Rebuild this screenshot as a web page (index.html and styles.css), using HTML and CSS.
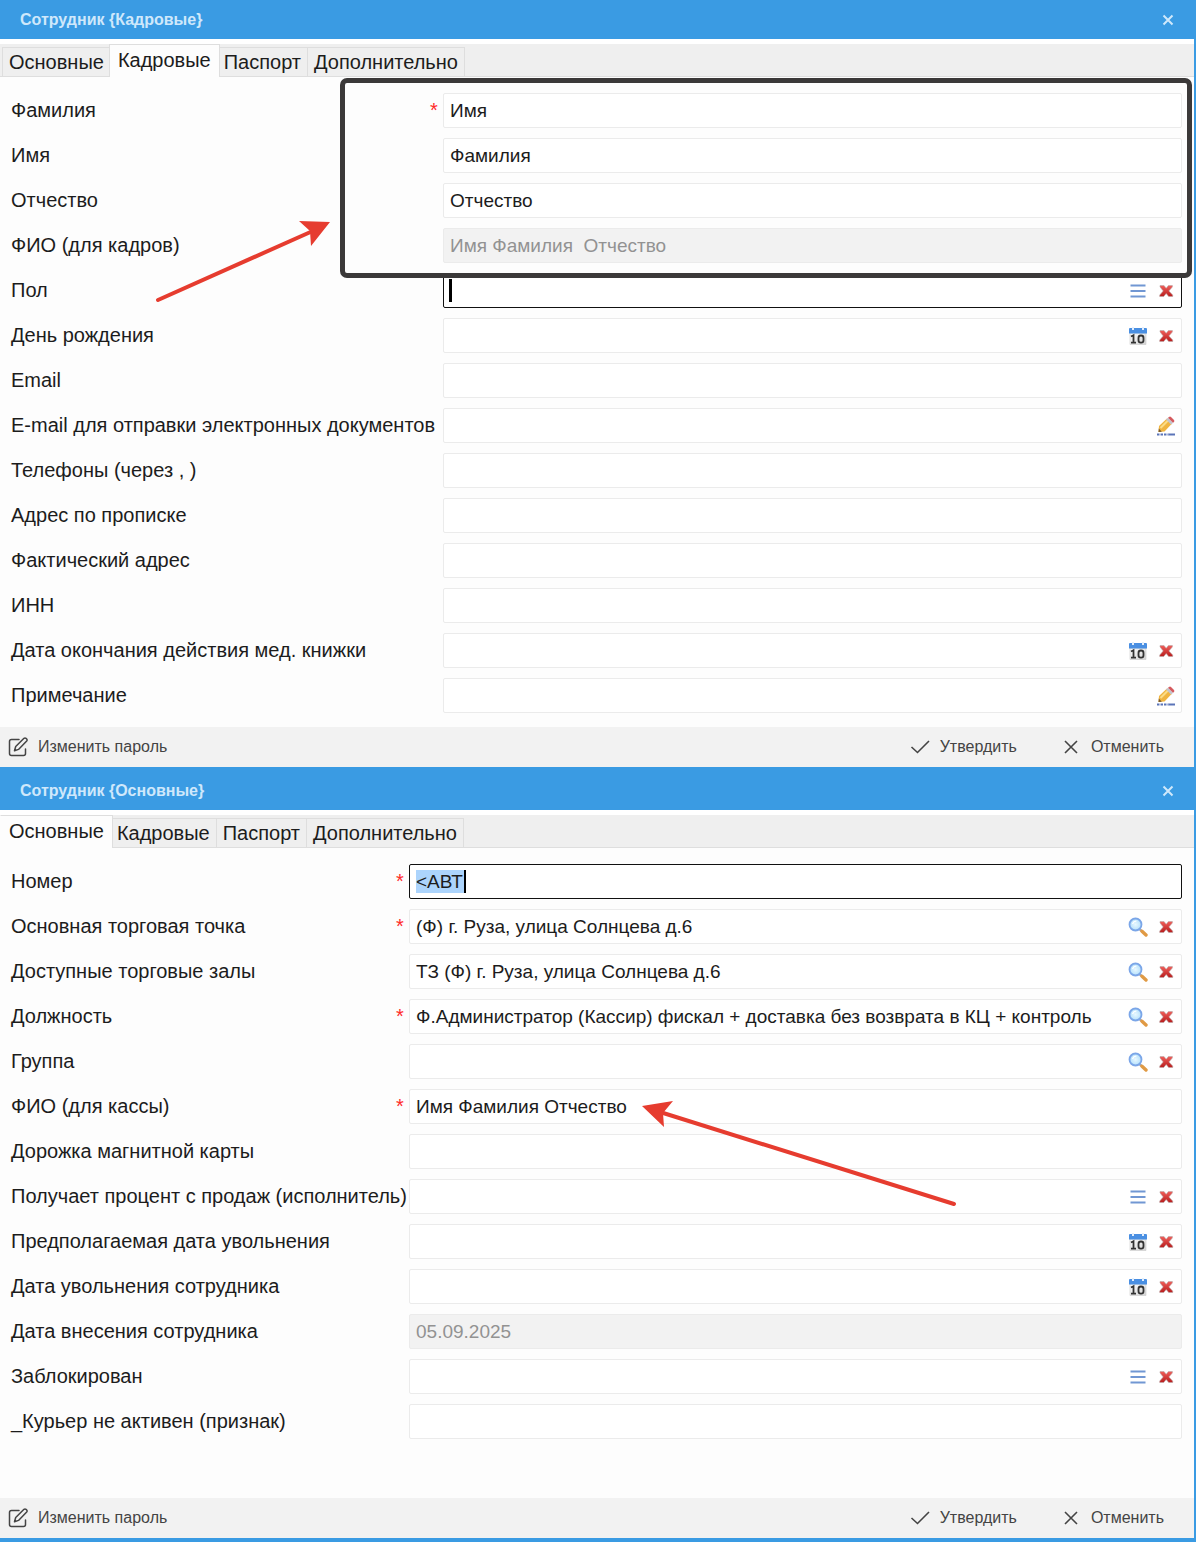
FILE: index.html
```html
<!DOCTYPE html>
<html lang="ru">
<head>
    <meta charset="UTF-8">
    <meta name="viewport" content="width=device-width, initial-scale=1.0">
    <title>Сотрудник</title>
    <link rel="stylesheet" href="styles.css">
</head>
<body>
    <svg class="sprite" aria-hidden="true">
        <defs>
            <linearGradient id="g-red" x1="0" y1="0" x2="0" y2="1">
                <stop offset="0" stop-color="#f0605c"/>
                <stop offset="1" stop-color="#b81c1c"/>
            </linearGradient>
            <linearGradient id="g-cal" x1="0" y1="0" x2="1" y2="1">
                <stop offset="0" stop-color="#ffffff"/>
                <stop offset="1" stop-color="#d2d2d2"/>
            </linearGradient>
            <radialGradient id="g-lens">
                <stop offset="0" stop-color="#e8f8ff"/>
                <stop offset="1" stop-color="#b4e0fc"/>
            </radialGradient>
        </defs>
        <symbol id="i-close" viewBox="0 0 12 12">
            <path d="M1.5 1.5l9 9M10.5 1.5l-9 9" fill="none" stroke="currentColor" stroke-width="2"/>
        </symbol>
        <symbol id="i-list" viewBox="0 0 20 20">
            <path d="M2.5 4.5h15M2.5 10h15M2.5 15.5h15" fill="none" stroke="#7197d3" stroke-width="2"/>
        </symbol>
        <symbol id="i-clear" viewBox="0 0 20 20">
            <path d="M4 4.5h4l2.2 2.7 2.2-2.7h4v1.4l-3.5 4 3.8 4.2v1.4h-4l-2.5-3-2.5 3h-4v-1.4l3.5-4.2L4 5.9z" fill="url(#g-red)" stroke="#b9a9a9" stroke-width="0.6"/>
        </symbol>
        <symbol id="i-date" viewBox="0 0 20 20">
            <path d="M2 7h16v11.5H2z" fill="url(#g-cal)" stroke="#c9c9c9" stroke-width="0.6"/>
            <path d="M1 3q0-1 1-1h16q1 0 1 1v4.500H1z" fill="#4a8fe2"/>
            <path d="M4 1h2v3H4zM14 1h2v3h-2z" fill="#e4eefb"/>
            <path d="M3 10.5l2.5-1.3v7.500M3 16.700h5" fill="none" stroke="#333" stroke-width="1.8"/>
            <rect x="10.5" y="9.5" width="5" height="7.2" rx="2.4" fill="none" stroke="#333" stroke-width="1.8"/>
        </symbol>
        <symbol id="i-search" viewBox="0 0 20 20">
            <path d="M11.5 12l2.5 2.3" stroke="#a8a8b0" stroke-width="2.4"/>
            <path d="M14 14.2l4 3.8" stroke="#e09a44" stroke-width="3.4" stroke-linecap="round"/>
            <circle cx="7.5" cy="7.5" r="6" fill="url(#g-lens)" stroke="#7ba6e8" stroke-width="1.8"/>
            <path d="M4.5 7q1-3 4-3" fill="none" stroke="#fff" stroke-width="1.2"/>
        </symbol>
        <symbol id="i-edit" viewBox="0 0 20 20">
            <path d="M2.5 16l.5-6 8-7.5 5 5-7.5 8z" fill="#f0b440"/>
            <path d="M4.5 12l8-8" stroke="#fbdc86" stroke-width="2"/>
            <path d="M2.5 16l.3-3.5 3 3.2z" fill="#7a5a2c"/>
            <path d="M10 3.5l2-1.7 5 5L15.2 8.8z" fill="#c4c4cc"/>
            <path d="M12 1.8l1-.9q1-.8 2 0l3 3q.8 1 0 2l-1 .9z" fill="#d55a5e"/>
            <path d="M1 18.5h11.5" stroke="#5b74b8" stroke-width="2" stroke-dasharray="2.5 1"/>
            <path d="M12.5 18.5H19" stroke="#5b74b8" stroke-width="2"/>
        </symbol>
        <symbol id="i-password" viewBox="0 0 20 20">
            <path d="M11 2.5H3.5q-2 0-2 2v12q0 2 2 2h12q2 0 2-2V12" fill="none" stroke="currentColor" stroke-width="1.5" stroke-linecap="round"/>
            <path d="M6.5 13.7l1.2-4.2 8.3-8.2q1-.8 2 0l.7.7q.8 1 0 2l-8.2 8.4z" fill="none" stroke="currentColor" stroke-width="1.5" stroke-linejoin="round"/>
        </symbol>
        <symbol id="i-ok" viewBox="0 0 20 20">
            <path d="M1.5 10l6 5.5L19 4" fill="none" stroke="currentColor" stroke-width="1.6"/>
        </symbol>
        <symbol id="i-cancel" viewBox="0 0 20 20">
            <path d="M4 4l12 12M16 4L4 16" fill="none" stroke="currentColor" stroke-width="1.6"/>
        </symbol>
    </svg>

    <section class="window">
        <header class="titlebar">
            <h2>Сотрудник {Кадровые}</h2>
            <button type="button" class="close" aria-label="Закрыть"><svg><use href="#i-close"/></svg></button>
        </header>
        <nav class="tabs">
            <button type="button" class="tab">Основные</button>
            <button type="button" class="tab active">Кадровые</button>
            <button type="button" class="tab">Паспорт</button>
            <button type="button" class="tab">Дополнительно</button>
        </nav>
        <form class="form form-personnel">
            <label for="surname">Фамилия</label>
            <span class="required">*</span>
            <div class="field"><input type="text" id="surname" value="Имя"></div>

            <label for="name">Имя</label>
            <div class="field"><input type="text" id="name" value="Фамилия"></div>

            <label for="patronymic">Отчество</label>
            <div class="field"><input type="text" id="patronymic" value="Отчество"></div>

            <label for="fullname">ФИО (для кадров)</label>
            <div class="field disabled"><input type="text" id="fullname" value="Имя Фамилия  Отчество" disabled></div>

            <label for="gender">Пол</label>
            <div class="field current">
                <input type="text" id="gender" class="with-caret">
                <button type="button" aria-label="Выбрать"><svg><use href="#i-list"/></svg></button>
                <button type="button" aria-label="Очистить"><svg><use href="#i-clear"/></svg></button>
            </div>

            <label for="birthday">День рождения</label>
            <div class="field">
                <input type="text" id="birthday">
                <button type="button" aria-label="Календарь"><svg><use href="#i-date"/></svg></button>
                <button type="button" aria-label="Очистить"><svg><use href="#i-clear"/></svg></button>
            </div>

            <label for="email">Email</label>
            <div class="field"><input type="text" id="email"></div>

            <label for="docs-email">E-mail для отправки электронных документов</label>
            <div class="field">
                <input type="text" id="docs-email">
                <button type="button" aria-label="Редактировать"><svg><use href="#i-edit"/></svg></button>
            </div>

            <label for="phones">Телефоны (через , )</label>
            <div class="field"><input type="text" id="phones"></div>

            <label for="reg-address">Адрес по прописке</label>
            <div class="field"><input type="text" id="reg-address"></div>

            <label for="address">Фактический адрес</label>
            <div class="field"><input type="text" id="address"></div>

            <label for="inn">ИНН</label>
            <div class="field"><input type="text" id="inn"></div>

            <label for="med-date">Дата окончания действия мед. книжки</label>
            <div class="field">
                <input type="text" id="med-date">
                <button type="button" aria-label="Календарь"><svg><use href="#i-date"/></svg></button>
                <button type="button" aria-label="Очистить"><svg><use href="#i-clear"/></svg></button>
            </div>

            <label for="note">Примечание</label>
            <div class="field">
                <input type="text" id="note">
                <button type="button" aria-label="Редактировать"><svg><use href="#i-edit"/></svg></button>
            </div>
        </form>
        <footer class="toolbar">
            <button type="button"><svg><use href="#i-password"/></svg>Изменить пароль</button>
            <div class="actions">
                <button type="button"><svg><use href="#i-ok"/></svg>Утвердить</button>
                <button type="button"><svg><use href="#i-cancel"/></svg>Отменить</button>
            </div>
        </footer>

        <div class="frame"></div>
        <svg class="arrow arrow-names" viewBox="0 0 180 90" aria-hidden="true">
            <path d="M8 85L165 15" stroke="#e63c2f" stroke-width="4" stroke-linecap="round"/>
            <path d="M180 7L149 6l11 10 1 15z" fill="#e63c2f"/>
        </svg>
    </section>

    <section class="window">
        <header class="titlebar">
            <h2>Сотрудник {Основные}</h2>
            <button type="button" class="close" aria-label="Закрыть"><svg><use href="#i-close"/></svg></button>
        </header>
        <nav class="tabs">
            <button type="button" class="tab active">Основные</button>
            <button type="button" class="tab">Кадровые</button>
            <button type="button" class="tab">Паспорт</button>
            <button type="button" class="tab">Дополнительно</button>
        </nav>
        <form class="form form-main">
            <label for="number">Номер</label>
            <span class="required">*</span>
            <div class="field current"><input type="text" id="number" class="with-selection" value="&lt;АВТ"></div>

            <label for="store">Основная торговая точка</label>
            <span class="required">*</span>
            <div class="field">
                <input type="text" id="store" value="(Ф) г. Руза, улица Солнцева д.6">
                <button type="button" aria-label="Найти"><svg><use href="#i-search"/></svg></button>
                <button type="button" aria-label="Очистить"><svg><use href="#i-clear"/></svg></button>
            </div>

            <label for="halls">Доступные торговые залы</label>
            <div class="field">
                <input type="text" id="halls" value="ТЗ (Ф) г. Руза, улица Солнцева д.6">
                <button type="button" aria-label="Найти"><svg><use href="#i-search"/></svg></button>
                <button type="button" aria-label="Очистить"><svg><use href="#i-clear"/></svg></button>
            </div>

            <label for="position">Должность</label>
            <span class="required">*</span>
            <div class="field">
                <input type="text" id="position" value="Ф.Администратор (Кассир) фискал + доставка без возврата в КЦ + контроль">
                <button type="button" aria-label="Найти"><svg><use href="#i-search"/></svg></button>
                <button type="button" aria-label="Очистить"><svg><use href="#i-clear"/></svg></button>
            </div>

            <label for="group">Группа</label>
            <div class="field">
                <input type="text" id="group">
                <button type="button" aria-label="Найти"><svg><use href="#i-search"/></svg></button>
                <button type="button" aria-label="Очистить"><svg><use href="#i-clear"/></svg></button>
            </div>

            <label for="cash-name">ФИО (для кассы)</label>
            <span class="required">*</span>
            <div class="field"><input type="text" id="cash-name" value="Имя Фамилия Отчество"></div>

            <label for="card">Дорожка магнитной карты</label>
            <div class="field"><input type="text" id="card"></div>

            <label for="percent">Получает процент с продаж (исполнитель)</label>
            <div class="field">
                <input type="text" id="percent">
                <button type="button" aria-label="Выбрать"><svg><use href="#i-list"/></svg></button>
                <button type="button" aria-label="Очистить"><svg><use href="#i-clear"/></svg></button>
            </div>

            <label for="planned-leave">Предполагаемая дата увольнения</label>
            <div class="field">
                <input type="text" id="planned-leave">
                <button type="button" aria-label="Календарь"><svg><use href="#i-date"/></svg></button>
                <button type="button" aria-label="Очистить"><svg><use href="#i-clear"/></svg></button>
            </div>

            <label for="leave">Дата увольнения сотрудника</label>
            <div class="field">
                <input type="text" id="leave">
                <button type="button" aria-label="Календарь"><svg><use href="#i-date"/></svg></button>
                <button type="button" aria-label="Очистить"><svg><use href="#i-clear"/></svg></button>
            </div>

            <label for="created">Дата внесения сотрудника</label>
            <div class="field disabled"><input type="text" id="created" value="05.09.2025" disabled></div>

            <label for="blocked">Заблокирован</label>
            <div class="field">
                <input type="text" id="blocked">
                <button type="button" aria-label="Выбрать"><svg><use href="#i-list"/></svg></button>
                <button type="button" aria-label="Очистить"><svg><use href="#i-clear"/></svg></button>
            </div>

            <label for="courier">_Курьер не активен (признак)</label>
            <div class="field"><input type="text" id="courier"></div>
        </form>
        <footer class="toolbar">
            <button type="button"><svg><use href="#i-password"/></svg>Изменить пароль</button>
            <div class="actions">
                <button type="button"><svg><use href="#i-ok"/></svg>Утвердить</button>
                <button type="button"><svg><use href="#i-cancel"/></svg>Отменить</button>
            </div>
        </footer>

        <svg class="arrow arrow-cash" viewBox="0 0 320 110" aria-hidden="true">
            <path d="M314 103L20 11" stroke="#e63c2f" stroke-width="4" stroke-linecap="round"/>
            <path d="M2 5L33 0 23 12l1 14z" fill="#e63c2f"/>
        </svg>
    </section>
</body>
</html>
```

FILE: styles.css
```css
* { box-sizing: border-box; }
body {
    margin: 0;
    font-family: "Liberation Sans", Arial, sans-serif;
    font-size: 20px;
    color: #1c1c1c;
    background: #fdfdfd;
}
button, input {
    font: inherit;
    color: inherit;
    background: none;
    border: none;
    margin: 0;
    padding: 0;
}
button { cursor: pointer; }
.sprite {
    position: absolute;
    width: 0;
    height: 0;
}

.window {
    position: relative;
    display: flex;
    flex-direction: column;
    min-height: 771px;
    border-right: 2px solid #3a9be3;
    border-bottom: 4px solid #3a9be3;
    background: #fdfdfd;
}
.titlebar {
    display: flex;
    align-items: center;
    justify-content: space-between;
    height: 39px;
    padding: 0 20px;
    background: #3a9be3;
    color: #cfe8fb;
}
.titlebar h2 {
    margin: 0;
    font-size: 16px;
}
.close svg {
    display: block;
    width: 12px;
    height: 12px;
}

.tabs {
    display: flex;
    align-items: flex-end;
    height: 38px;
    padding-left: 2px;
    border-top: 5px solid #fff;
    background: #efefef;
    box-shadow: inset 0 -1px #dedede;
}
.tab {
    height: 30px;
    padding: 0 6px;
    border: 1px solid #dedede;
    border-left: none;
    background: #efefef;
}
.tab:first-child { border-left: 1px solid #dedede; }
.tab.active {
    position: relative;
    height: 33px;
    margin: 0 -2px;
    padding: 0 8px 2px;
    border-bottom: none;
    border-left: 1px solid #dedede;
    background: #fdfdfd;
}
.tab.active:first-child { border-left-color: #fdfdfd; }

.form {
    flex: 1;
    display: grid;
    grid-auto-rows: 35px;
    row-gap: 10px;
    align-items: center;
    padding: 16px 12px 14px 11px;
}
.form-personnel { grid-template-columns: 414px 18px 1fr; }
.form-main { grid-template-columns: 380px 18px 1fr; }
.form label {
    grid-column: 1;
    white-space: nowrap;
}
.required {
    grid-column: 2;
    text-align: center;
    color: #ff2a2a;
}
.field {
    grid-column: 3;
    display: flex;
    height: 35px;
    padding-right: 1px;
    border: 1px solid #ebebeb;
    border-radius: 2px;
    background: #fff;
    font-size: 19px;
}
.field input {
    flex: 1;
    min-width: 0;
    padding: 0 6px;
    outline: none;
}
.field button {
    display: flex;
    align-items: center;
    justify-content: center;
    width: 28px;
}
.field svg {
    width: 20px;
    height: 20px;
}
.field.current { border-color: #111; }
.field.disabled {
    background: #f2f2f2;
    color: #929292;
}
.with-caret {
    background: linear-gradient(#000, #000) no-repeat 5px 5px / 3px 23px;
}
.with-selection {
    background:
        linear-gradient(#000, #000) no-repeat 54px 5px / 2px 23px,
        linear-gradient(#acd4fc, #acd4fc) no-repeat 6px 5px / 48px 23px;
}

.toolbar {
    display: flex;
    justify-content: space-between;
    height: 40px;
    padding: 0 30px 0 8px;
    background: #f2f2f2;
    color: #444;
    font-size: 16px;
}
.toolbar button {
    display: flex;
    align-items: center;
    gap: 10px;
}
.toolbar svg {
    width: 20px;
    height: 20px;
}
.actions {
    display: flex;
    gap: 44px;
}

/* callouts over the forms */
.frame {
    position: absolute;
    top: 78px;
    left: 340px;
    right: 2px;
    height: 200px;
    border: 5px solid #3b3939;
    border-radius: 7px;
    pointer-events: none;
}
.arrow {
    position: absolute;
    pointer-events: none;
}
.arrow-names {
    top: 215px;
    left: 150px;
    width: 180px;
    height: 90px;
}
.arrow-cash {
    top: 330px;
    left: 640px;
    width: 320px;
    height: 110px;
}
```
